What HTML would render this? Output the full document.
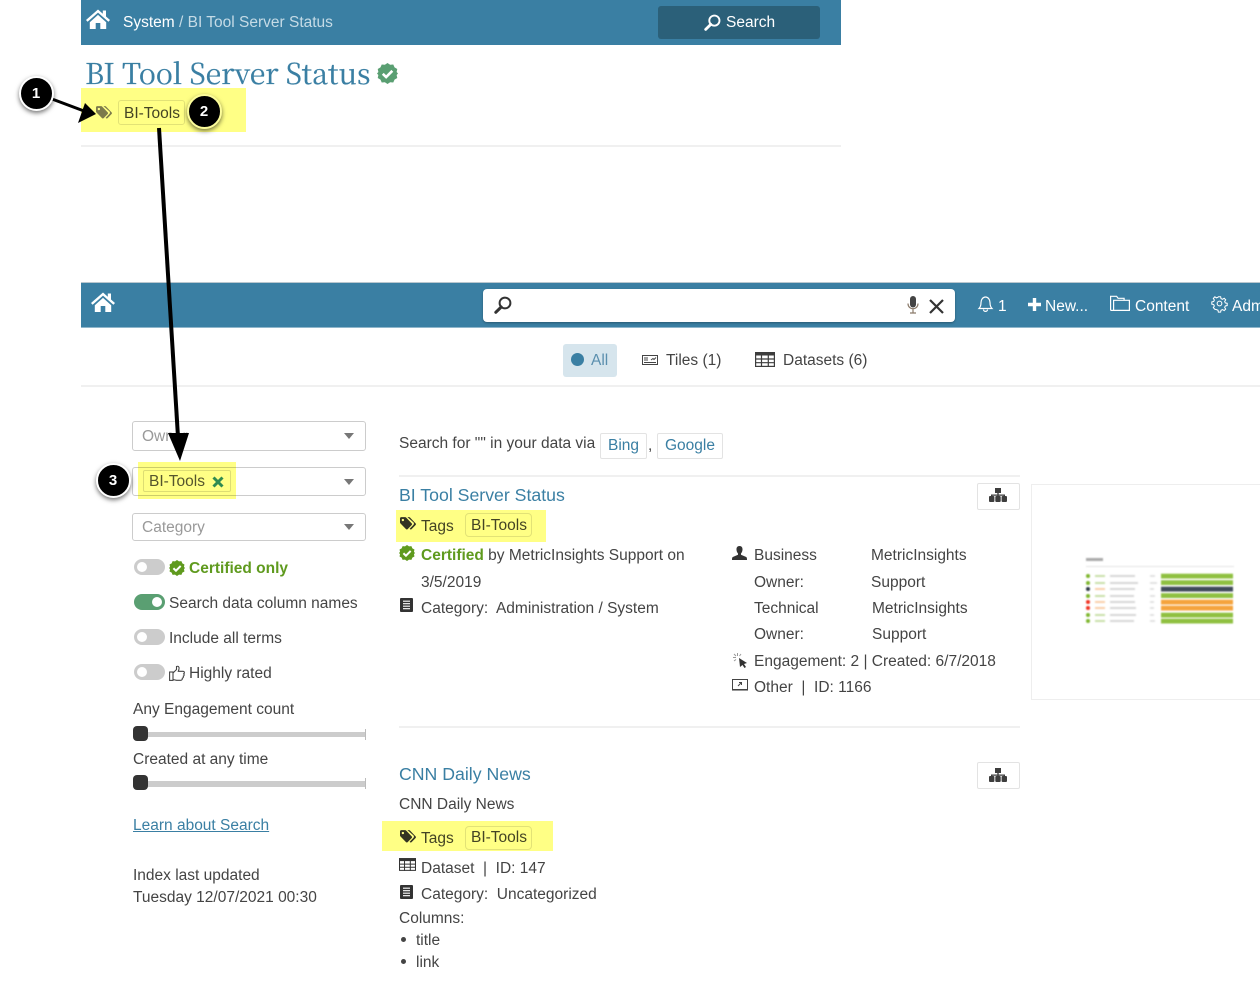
<!DOCTYPE html>
<html lang="en"><head><meta charset="utf-8"><title>BI Tool Server Status</title>
<style>
html,body{margin:0;padding:0;background:#fff}
body{position:relative;width:1260px;height:998px;overflow:hidden;font-family:"Liberation Sans",Arial,sans-serif;font-size:15.5px;color:#444}
.t{position:absolute;white-space:pre;line-height:20px;margin-top:1px}
.b{position:absolute;box-sizing:border-box}
svg{position:absolute;overflow:visible}
.l{color:#3a7fa3}
.w{color:#fff}
.sel{position:absolute;left:132px;width:234px;box-sizing:border-box;border:1px solid #ccc;border-radius:3px;background:#fff}
.car{position:absolute;left:344px;width:0;height:0;border-left:5.5px solid transparent;border-right:5.5px solid transparent;border-top:6px solid #777}
.ph{color:#999}
.tog{position:absolute;left:134px;width:31px;height:16px;border-radius:8px;background:#ccc}
.tog i{position:absolute;left:3px;top:3px;width:10px;height:10px;border-radius:5px;background:#fff}
.tog.on{background:#5a9f72}.tog.on i{left:18px}
.pill{position:absolute;box-sizing:border-box;border:1px solid #e2e2e2;border-radius:4px;left:465px;width:67px;height:24px}
.y{position:absolute;background:#ffff85;mix-blend-mode:multiply}
.num{position:absolute;box-sizing:border-box;width:35px;height:35px;border-radius:50%;background:#000;border:2px solid #fff;box-shadow:0 2px 5px rgba(0,0,0,.55);color:#fff;font-weight:bold;font-size:15px;line-height:31px;text-align:center}
.rule{position:absolute;height:2px;background:#f0f0f0}
.btn{position:absolute;box-sizing:border-box;border:1px solid #e3e3e3;border-radius:2px;background:#fff}
</style></head><body>
<svg width="0" height="0" style="position:absolute"><defs>
<symbol id="home" viewBox="0 0 24 20"><path d="M12 0.5L0 11l1.6 1.8L12 3.6l10.4 9.2L24 11l-4-3.5V1.5h-3.2v3.2z"/><path d="M3.8 13.2L12 5.9l8.2 7.3V20h-5.9v-6H9.7v6H3.8z"/></symbol>
<symbol id="tag" viewBox="0 0 20 16"><path fill-rule="evenodd" d="M0 1.6V6.6c0 .5.2.9.5 1.2l7 7.3c.6.6 1.5.6 2.1 0l5-5.2c.6-.6.6-1.500 0-2.100l-7-7.300C7.300.200 6.900 0 6.400 0H1.600C.700 0 0 .700 0 1.600zM3.600 2.200a1.500 1.500 0 1 1 0 3 1.500 1.500 0 0 1 0-3z"/><path d="M9.300 0h2c.5 0 .9.200 1.200.500l7 7.300c.6.600.6 1.500 0 2.100l-5 5.200c-.6.600-1.500.600-2.100 0l-.4-.4 4.800-5c.9-.9.900-2.200 0-3.100z"/></symbol>
<symbol id="chk" viewBox="0 0 20 20"><path d="M10 0l2.500 1.700 3-.3 1.200 2.800 2.600 1.500-.6 2.900L20 10l-1.300 1.400.6 2.900-2.600 1.500-1.200 2.800-3-.3L10 20l-2.500-1.700-3 .3-1.200-2.800-2.600-1.500.6-2.900L0 10l1.300-1.400-.6-2.900 2.600-1.500 1.200-2.800 3 .3z"/><path d="M5.500 10.300l3.200 3.100 5.900-6" fill="none" stroke="#fff" stroke-width="2.500"/></symbol>
<symbol id="mag" viewBox="0 0 18 18"><circle cx="11" cy="7" r="5.400" fill="none" stroke="currentColor" stroke-width="2"/><path d="M7.200 11L1.800 16.300" fill="none" stroke="currentColor" stroke-width="3" stroke-linecap="round"/></symbol>
<symbol id="cat" viewBox="0 0 13 14"><rect width="13" height="14" rx="1"/><path d="M3 3.200h7M3 5.700h7M3 8.200h7M3 10.700h7" stroke="#fff" stroke-width="1.100"/></symbol>
<symbol id="map" viewBox="0 0 18 14"><path d="M6 0h6v5H6zM8.300 4.500h1.400V6.500H16V9h-1.400V7.700H9.700V9H8.300V7.700H3.400V9H2V6.500h6.300z"/><rect x="0" y="8" width="5.400" height="6" rx="1"/><rect x="6.300" y="8" width="5.400" height="6" rx="1"/><rect x="12.600" y="8" width="5.400" height="6" rx="1"/></symbol>
<symbol id="grid" viewBox="0 0 20 15"><rect x=".6" y=".6" width="18.800" height="13.800" fill="none" stroke="currentColor" stroke-width="1.200"/><rect width="20" height="3.500" fill="currentColor"/><path d="M0 7h20M0 10.700h20M6.500 3v12M13.300 3v12" stroke="currentColor" stroke-width="1.200"/></symbol>
</defs></svg>

<!-- Top bar -->
<div class="b" style="left:81px;top:0;width:760px;height:45px;background:#3a7fa3"></div>
<svg style="left:86px;top:9px" width="24" height="20" fill="#fff"><use href="#home"/></svg>
<span class="t w" style="left:123px;top:12px">System<span style="color:#c5dbe6"> / BI Tool Server Status</span></span>
<div class="b" style="left:658px;top:6px;width:162px;height:33px;background:#2b6079;border-radius:3px"></div>
<svg style="left:704px;top:14px;color:#fff" width="17" height="17"><use href="#mag"/></svg>
<span class="t w" style="left:726px;top:12px">Search</span>

<span class="t l" style="left:85px;top:55px;font-family:'Noto Serif CJK SC','Liberation Serif',serif;font-size:28.500px;line-height:34px;-webkit-text-stroke:.25px #3a7fa3">BI Tool Server Status</span>
<svg style="left:377px;top:63px" width="21" height="21" fill="#5a9f72"><use href="#chk"/></svg>
<svg style="left:96px;top:106px" width="16" height="13" fill="#7c7a90"><use href="#tag"/></svg>
<div class="b" style="left:118px;top:100px;width:67px;height:25px;border:1px solid #e2e2e2;border-radius:3px"></div>
<span class="t" style="left:124px;top:103px">BI-Tools</span>
<div class="rule" style="left:81px;top:145px;width:760px"></div>

<!-- Second nav -->
<div class="b" style="left:81px;top:282px;width:1179px;height:46px;background:#3a7fa3;border-top:1px solid #b9c7cf;border-bottom:1px solid #8fb6cb"></div>
<svg style="left:91px;top:292px" width="24" height="20" fill="#fff"><use href="#home"/></svg>
<div class="b" style="left:483px;top:289px;width:472px;height:33px;background:#fff;border-radius:4px;box-shadow:0 1px 2px rgba(0,0,0,.3)"></div>
<svg style="left:494px;top:296px;color:#333" width="18" height="18"><use href="#mag"/></svg>
<svg style="left:907px;top:296px" width="12" height="18" viewBox="0 0 12 18"><rect x="3" y="0" width="6" height="11.500" rx="3" fill="#444"/><path d="M1 7.500c0 7 10 7 10 0M6 13v3.500M3 17h6" fill="none" stroke="#8a7a6a" stroke-width="1.200"/></svg>
<svg style="left:929px;top:299px" width="15" height="15" viewBox="0 0 15 15"><path d="M1 1l13 13M14 1L1 14" stroke="#333" stroke-width="2.200"/></svg>
<svg style="left:978px;top:295px" width="15" height="17" viewBox="0 0 15 17" fill="none" stroke="#fff" stroke-width="1.200"><path d="M1 13.500c1.500-1.500 2-3 2-6 0-3 2-5.500 4.500-5.500S12 4.500 12 7.500c0 3 .5 4.500 2 6z"/><path d="M5.500 14.500c0 2.500 4 2.500 4 0" /></svg>
<span class="t w" style="left:998px;top:296px">1</span>
<svg style="left:1028px;top:298px" width="13" height="13" viewBox="0 0 13 13"><path d="M6.500 0v13M0 6.500h13" stroke="#fff" stroke-width="3.400"/></svg>
<span class="t w" style="left:1045px;top:296px">New...</span>
<svg style="left:1110px;top:295px" width="20" height="16" viewBox="0 0 20 16" fill="none" stroke="#fff" stroke-width="1.200"><path d="M.6 15.400V1.300h6l1.500 2h6v2M3.600 15.400V5.300h15.800v10.100z"/><path d="M.6 15.400h3"/></svg>
<span class="t w" style="left:1135px;top:296px">Content</span>
<svg style="left:1212px;top:296px" width="15" height="15" viewBox="0 0 16 16" fill="none" stroke="#fff" stroke-width="1.100"><circle cx="8" cy="8" r="2.500"/><path d="M6.800.8h2.400l.4 2 1.600.7 1.800-1.100 1.600 1.700-1.100 1.700.7 1.600 2 .4v2.400l-2 .4-.7 1.600 1.100 1.700-1.600 1.700-1.800-1.100-1.600.7-.4 2H6.800l-.4-2-1.600-.7L3 14.100l-1.600-1.700 1.100-1.700-.7-1.600-2-.4V6.300l2-.4.7-1.600L1.400 2.600 3 .9l1.800 1.100 1.600-.7z"/></svg>
<span class="t w" style="left:1232px;top:296px">Adm</span>

<!-- Tabs -->
<div class="b" style="left:563px;top:344px;width:54px;height:33px;background:#d6e5ed;border-radius:3px"></div>
<div class="b" style="left:571px;top:353px;width:13px;height:13px;border-radius:50%;background:#3a7fa3"></div>
<span class="t" style="left:591px;top:350px;color:#5a8fae">All</span>
<svg style="left:642px;top:355px" width="16" height="10" viewBox="0 0 16 10" fill="none" stroke="#444" stroke-width="1"><rect x=".5" y=".5" width="15" height="9"/><path d="M2 3h4M2 5h4M9 5l2-1.500 1 1 2-2M2 7.500h12"/></svg>
<span class="t" style="left:666px;top:350px">Tiles (1)</span>
<svg style="left:755px;top:352px;color:#3d3d3d" width="20" height="15"><use href="#grid"/></svg>
<span class="t" style="left:783px;top:350px">Datasets (6)</span>
<div class="rule" style="left:81px;top:385px;width:1179px"></div>

<!-- Filters -->
<div class="sel" style="top:421px;height:30px"></div><span class="t ph" style="left:142px;top:426px">Owner</span><div class="car" style="top:433px"></div>
<div class="sel" style="top:467px;height:29px"></div><div class="car" style="top:479px"></div>
<div class="b" style="left:143px;top:470px;width:88px;height:22px;border:1px solid #ddd;border-radius:2px"></div>
<span class="t" style="left:149px;top:471px;color:#555">BI-Tools</span>
<svg style="left:212px;top:476px" width="12" height="12" viewBox="0 0 12 12"><path d="M1.500 1.500l9 9M10.500 1.500l-9 9" stroke="#2f8a9a" stroke-width="3"/></svg>
<div class="sel" style="top:513px;height:28px"></div><span class="t ph" style="left:142px;top:517px">Category</span><div class="car" style="top:524px"></div>

<div class="tog" style="top:559px"><i></i></div>
<svg style="left:169px;top:560px" width="16" height="16" fill="#5f9a1e"><use href="#chk"/></svg>
<span class="t" style="left:189px;top:558px;font-weight:bold;color:#5f9a1e">Certified only</span>
<div class="tog on" style="top:594px"><i></i></div>
<span class="t" style="left:169px;top:593px">Search data column names</span>
<div class="tog" style="top:629px"><i></i></div>
<span class="t" style="left:169px;top:628px">Include all terms</span>
<div class="tog" style="top:664px"><i></i></div>
<svg style="left:169px;top:665px" width="16" height="16" viewBox="0 0 16 16" fill="none" stroke="#444" stroke-width="1.100"><rect x=".6" y="7" width="3.400" height="8.400"/><path d="M4 8l3.500-3.500V1.500c1.800-.8 3 .6 2.500 2.500L9.300 6.300h4.700c1.600 0 1.800 1.900.7 2.500.8.800.5 2-.4 2.400.4 1-.2 1.900-1 2.100.2 1.100-.5 2-1.600 2H7.500L4 14.500"/></svg>
<span class="t" style="left:189px;top:663px">Highly rated</span>

<span class="t" style="left:133px;top:699px">Any Engagement count</span>
<div class="b" style="left:133px;top:732px;width:233px;height:5px;background:#ccc"></div>
<div class="b" style="left:365px;top:729px;width:1px;height:11px;background:#bbb"></div>
<div class="b" style="left:133px;top:726px;width:15px;height:15px;background:#333;border-radius:4px"></div>
<span class="t" style="left:133px;top:749px">Created at any time</span>
<div class="b" style="left:133px;top:781px;width:233px;height:6px;background:#ccc"></div>
<div class="b" style="left:365px;top:778px;width:1px;height:11px;background:#bbb"></div>
<div class="b" style="left:133px;top:775px;width:15px;height:15px;background:#333;border-radius:4px"></div>
<span class="t l" style="left:133px;top:815px;text-decoration:underline">Learn about Search</span>
<span class="t" style="left:133px;top:865px">Index last updated</span>
<span class="t" style="left:133px;top:887px">Tuesday 12/07/2021 00:30</span>

<!-- Results -->
<span class="t" style="left:399px;top:433px">Search for "" in your data via</span>
<div class="btn" style="left:600px;top:433px;width:47px;height:26px"></div><span class="t l" style="left:608px;top:435px">Bing</span>
<span class="t" style="left:648px;top:435px">,</span>
<div class="btn" style="left:657px;top:433px;width:66px;height:26px"></div><span class="t l" style="left:665px;top:435px">Google</span>
<div class="rule" style="left:399px;top:475px;width:621px"></div>

<span class="t l" style="left:399px;top:484px;font-size:17.700px">BI Tool Server Status</span>
<div class="btn" style="left:977px;top:483px;width:43px;height:27px"></div>
<svg style="left:989px;top:488px" width="18" height="14" fill="#3d3d3d"><use href="#map"/></svg>
<svg style="left:400px;top:517px" width="16" height="13" fill="#333340"><use href="#tag"/></svg>
<span class="t" style="left:421px;top:516px">Tags</span>
<div class="pill" style="top:513px"></div>
<span class="t" style="left:471px;top:515px">BI-Tools</span>
<svg style="left:399px;top:545px" width="16" height="16" fill="#5f9a1e"><use href="#chk"/></svg>
<span class="t" style="left:421px;top:545px"><b style="color:#5f9a1e">Certified</b> by MetricInsights Support on</span>
<span class="t" style="left:421px;top:572px">3/5/2019</span>
<svg style="left:400px;top:598px" width="13" height="14" fill="#333"><use href="#cat"/></svg>
<span class="t" style="left:421px;top:598px">Category:  Administration / System</span>

<svg style="left:732px;top:546px" width="15" height="14" viewBox="0 0 15 14" fill="#333"><path d="M7.500 0C5.300 0 4.300 1.700 4.500 3.800c.1 1.500.7 3 1.500 3.700v1.300L.8 11C.2 11.300 0 12 0 14h15c0-2-.2-2.700-.8-3L9 8.800V7.500c.8-.7 1.400-2.200 1.500-3.700C10.700 1.700 9.700 0 7.500 0z"/></svg>
<span class="t" style="left:754px;top:545px">Business</span>
<span class="t" style="left:754px;top:572px">Owner:</span>
<span class="t" style="left:754px;top:598px">Technical</span>
<span class="t" style="left:754px;top:624px">Owner:</span>
<span class="t" style="left:871px;top:545px">MetricInsights</span>
<span class="t" style="left:871px;top:572px">Support</span>
<span class="t" style="left:872px;top:598px">MetricInsights</span>
<span class="t" style="left:872px;top:624px">Support</span>
<svg style="left:733px;top:653px" width="15" height="15" viewBox="0 0 15 15"><path d="M6 5l8 5-3 1 2 3-1.500 1-2-3-2.500 2z" fill="#333"/><path d="M4.500 0v3M0 4.500h3M1 1l2 2M8 1L6.500 3M1 8l2-1.500" stroke="#999" stroke-width="1"/></svg>
<span class="t" style="left:754px;top:651px">Engagement: 2 | Created: 6/7/2018</span>
<svg style="left:732px;top:679px" width="16" height="12" viewBox="0 0 16 12" fill="none" stroke="#444" stroke-width="1"><rect x=".5" y=".5" width="15" height="10"/><path d="M6 7l3.500-3.500M7 3.500h2.500V6" /><path d="M0 11.500h16" stroke="#999"/></svg>
<span class="t" style="left:754px;top:677px">Other  |  ID: 1166</span>

<!-- Thumbnail -->
<div class="b" style="left:1031px;top:484px;width:240px;height:216px;border:1px solid #eee"></div>
<svg style="left:1080px;top:552px;filter:blur(.7px)" width="160" height="75" viewBox="1080 552 160 75">
<rect x="1086" y="558" width="17" height="3" fill="#aaa"/>
<rect x="1086" y="566" width="148" height="1" fill="#e5e5e5"/>
<g opacity=".6">
<g fill="#bbb"><rect x="1110" y="575" width="25" height="2"/><rect x="1110" y="582" width="28" height="2"/><rect x="1110" y="588" width="25" height="2"/><rect x="1110" y="595" width="24" height="2"/><rect x="1110" y="601" width="25" height="2"/><rect x="1110" y="607" width="26" height="2"/><rect x="1110" y="614" width="26" height="2"/><rect x="1110" y="620" width="24" height="2"/></g>
<g fill="#cfcfcf"><rect x="1150" y="575" width="5" height="2"/><rect x="1150" y="582" width="7" height="2"/><rect x="1150" y="588" width="4" height="2"/><rect x="1150" y="595" width="5" height="2"/><rect x="1150" y="601" width="4" height="2"/><rect x="1150" y="607" width="4" height="2"/><rect x="1150" y="614" width="4" height="2"/><rect x="1150" y="620" width="5" height="2"/></g>
<g fill="#a5cc70"><rect x="1095" y="575" width="10" height="2"/><rect x="1095" y="582" width="10" height="2"/><rect x="1095" y="595" width="10" height="2"/><rect x="1095" y="614" width="10" height="2"/><rect x="1095" y="620" width="10" height="2"/></g>
<g fill="#f5b070"><rect x="1095" y="588" width="10" height="2"/><rect x="1095" y="601" width="10" height="2"/><rect x="1095" y="607" width="10" height="2"/></g>
</g>
<g fill="#8fc040"><rect x="1161" y="573.700" width="72" height="4.800"/><rect x="1161" y="580.200" width="72" height="4.800"/><rect x="1161" y="593.200" width="72" height="4.800"/><rect x="1161" y="612.700" width="72" height="4.800"/><rect x="1161" y="618.700" width="72" height="4.800"/></g>
<rect x="1161" y="586.700" width="72" height="4.800" fill="#3f4a58"/>
<g fill="#f5a33c"><rect x="1161" y="599.700" width="72" height="4.800"/><rect x="1161" y="605.700" width="72" height="4.800"/></g>
<g fill="#7db52c"><circle cx="1088" cy="576" r="2"/><circle cx="1088" cy="583" r="2"/><circle cx="1088" cy="596" r="2"/><circle cx="1088" cy="615" r="2"/><circle cx="1088" cy="621" r="2"/></g>
<circle cx="1088" cy="589" r="2" fill="#2c3644"/><circle cx="1088" cy="602" r="2" fill="#f03020"/><circle cx="1088" cy="608" r="2" fill="#f03020"/>
</svg>

<div class="rule" style="left:399px;top:726px;width:621px"></div>
<span class="t l" style="left:399px;top:763px;font-size:17.700px">CNN Daily News</span>
<div class="btn" style="left:977px;top:762px;width:43px;height:27px"></div>
<svg style="left:989px;top:768px" width="18" height="14" fill="#3d3d3d"><use href="#map"/></svg>
<span class="t" style="left:399px;top:794px">CNN Daily News</span>
<svg style="left:400px;top:830px" width="16" height="13" fill="#333340"><use href="#tag"/></svg>
<span class="t" style="left:421px;top:828px">Tags</span>
<div class="pill" style="top:826px"></div>
<span class="t" style="left:471px;top:827px">BI-Tools</span>
<svg style="left:399px;top:858px;color:#333" width="17" height="13"><use href="#grid"/></svg>
<span class="t" style="left:421px;top:858px">Dataset  |  ID: 147</span>
<svg style="left:400px;top:885px" width="13" height="14" fill="#333"><use href="#cat"/></svg>
<span class="t" style="left:421px;top:884px">Category:  Uncategorized</span>
<span class="t" style="left:399px;top:908px">Columns:</span>
<div class="b" style="left:401px;top:937px;width:5px;height:5px;border-radius:50%;background:#444"></div>
<span class="t" style="left:416px;top:930px">title</span>
<div class="b" style="left:401px;top:959px;width:5px;height:5px;border-radius:50%;background:#444"></div>
<span class="t" style="left:416px;top:952px">link</span>

<!-- Highlights -->
<div class="y" style="left:81px;top:88px;width:165px;height:44px"></div>
<div class="y" style="left:138px;top:462px;width:98px;height:37px"></div>
<div class="y" style="left:396px;top:510px;width:150px;height:32px"></div>
<div class="y" style="left:382px;top:821px;width:171px;height:30px"></div>

<!-- Annotations -->
<svg style="left:0;top:0" width="1260" height="998">
<path d="M52 99L84 111" stroke="#000" stroke-width="3"/><path d="M96 114L85 103 78 123z"/>
<path d="M159 128L178 437" stroke="#000" stroke-width="4"/><path d="M180 461L168 433H189z"/>
</svg>
<div class="num" style="left:18.500px;top:75.500px">1</div>
<div class="num" style="left:186.500px;top:93.500px;border-color:#fdfd9a">2</div>
<div class="num" style="left:95.500px;top:462.500px">3</div>
</body></html>
